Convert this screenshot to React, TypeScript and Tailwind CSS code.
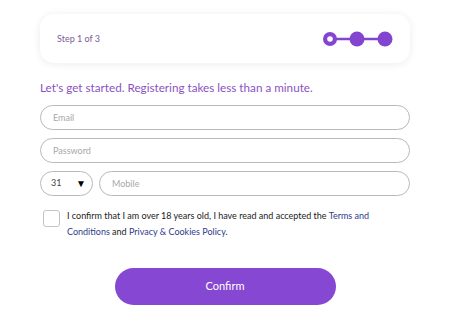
import * as React from 'react';

const inputClass =
  'w-full h-[25px] px-3 rounded-full border border-[#b9b9b9] bg-white text-[9px] text-[#555] placeholder:text-[#a8a8a8] outline-none';

function Steps() {
  return (
    <svg width="72" height="18" viewBox="0 0 72 18">
      <line x1="8" y1="9" x2="64" y2="9" stroke="#8344cf" strokeWidth="2.5" />
      <circle cx="8" cy="9" r="7" fill="#8344cf" />
      <circle cx="8" cy="9" r="2.8" fill="#fff" />
      <circle cx="35" cy="9" r="7.5" fill="#8344cf" />
      <circle cx="63" cy="9" r="7.5" fill="#8344cf" />
    </svg>
  );
}

export default function App() {
  return (
    <div className="w-[450px] h-[318px] bg-white font-['Lato',sans-serif] px-[40px] pt-[14px] overflow-hidden">
      <div className="h-[49px] rounded-[14px] bg-white shadow-[0_1px_8px_rgba(0,0,0,0.08)] flex items-center justify-between pl-[17px] pr-[16px]">
        <span className="text-[9px] text-[#7d5b9a]">Step 1 of 3</span>
        <Steps />
      </div>

      <h2 className="mt-[19px] text-[11.7px] text-[#8a52bf] leading-none">
        Let&apos;s get started. Registering takes less than a minute.
      </h2>

      <form className="mt-[11px] flex flex-col gap-[8px]">
        <input name="email" placeholder="Email" className={inputClass} />
        <input name="password" type="password" placeholder="Password" className={inputClass} />
        <div className="flex gap-[6px]">
          <div className="w-[53px] h-[25px] shrink-0 rounded-full border border-[#b9b9b9] flex items-center justify-between pl-[10px] pr-[6px] text-[9px] text-[#444]">
            <span>31</span>
            <span className="text-[10px] text-black">▼</span>
          </div>
          <input name="mobile" placeholder="Mobile" className={inputClass} />
        </div>

        <div className="mt-[6px] flex gap-[7px] pl-[3px]">
          <div className="w-[17px] h-[17px] shrink-0 rounded-[3px] border border-[#c4c4c4] bg-white" />
          <p className="-mt-[2px] text-[9px] leading-[16px] text-[#222] pr-[20px]">
            I confirm that I am over 18 years old, I have read and accepted the{' '}
            <a className="text-[#2e3a8c]">Terms and Conditions</a> and{' '}
            <a className="text-[#2e3a8c]">Privacy &amp; Cookies Policy</a>.
          </p>
        </div>

        <div className="flex justify-center mt-[20px]">
          <button type="button" className="w-[221px] h-[37px] rounded-full bg-[#8647d2] text-white text-[11px]">
            Confirm
          </button>
        </div>
      </form>
    </div>
  );
}
